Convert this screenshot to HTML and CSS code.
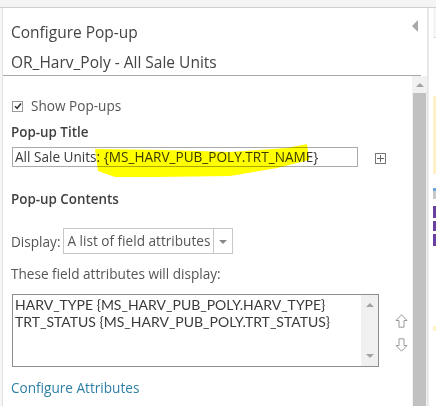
FILE: index.html
```html
<!DOCTYPE html>
<html lang="en">

<head>
    <meta charset="UTF-8">
    <meta name="viewport" content="width=device-width, initial-scale=1.0">
    <title>Configure Pop-up</title>
    <link rel="stylesheet" href="styles.css">
</head>

<body>
    <div class="topbar"></div>
    <div class="frame">
        <div class="gutter"></div>
        <div class="panel">
            <div class="panel-head">
                <div class="head-row">
                    <span class="head-title">Configure Pop-up</span>
                    <span class="collapse"></span>
                </div>
                <div class="layer-name">OR_Harv_Poly - All Sale Units</div>
            </div>
            <div class="panel-body">
                <div class="content">
                    <label class="check-row">
                        <span class="checkbox">
                            <svg width="8" height="8" viewBox="0 0 8 8">
                                <path d="M1 4.2 L3.1 6.3 L7 1.6" fill="none" stroke="#333" stroke-width="1.5"/>
                            </svg>
                        </span>
                        Show Pop-ups
                    </label>

                    <div class="section-title">Pop-up Title</div>
                    <div class="title-row">
                        <div class="field">All Sale Units: {MS_HARV_PUB_POLY.TRT_NAME}</div>
                        <span class="plus-btn"></span>
                        <!-- marker stroke over the title expression -->
                        <svg class="marker" width="436" height="60" viewBox="0 0 436 60">
                            <path d="M80 5 L150 6 L215 8 L272 4 L292 0 L294 16 L262 24 L215 32 L140 33 L100 33 L83 27 Z" fill="#ffff00"/>
                        </svg>
                    </div>

                    <div class="section-title contents-title">Pop-up Contents</div>
                    <div class="display-row">
                        <span>Display:</span>
                        <div class="select">
                            <span class="select-text">A list of field attributes</span>
                            <span class="select-arrow"></span>
                        </div>
                    </div>

                    <div class="hint">These field attributes will display:</div>
                    <div class="attr-row">
                        <div class="attr-list">
                            <div class="attr-lines">
                                <div>HARV_TYPE {MS_HARV_PUB_POLY.HARV_TYPE}</div>
                                <div>TRT_STATUS {MS_HARV_PUB_POLY.TRT_STATUS}</div>
                            </div>
                            <div class="mini-scroll">
                                <span class="tri-up"></span>
                                <span class="tri-down"></span>
                            </div>
                        </div>
                        <div class="move-btns">
                            <svg width="13" height="14" viewBox="0 0 13 14">
                                <path d="M6.5 0.8 L12 6.5 L9 6.5 L9 13.2 L4 13.2 L4 6.5 L1 6.5 Z" fill="#fff" stroke="#999" stroke-width="1"/>
                            </svg>
                            <svg width="13" height="14" viewBox="0 0 13 14">
                                <path d="M6.5 13.2 L12 7.5 L9 7.5 L9 0.8 L4 0.8 L4 7.5 L1 7.5 Z" fill="#fff" stroke="#999" stroke-width="1"/>
                            </svg>
                        </div>
                    </div>

                    <a class="link" href="#">Configure Attributes</a>
                </div>
                <div class="scrollbar">
                    <span class="scroll-up"></span>
                    <div class="thumb"></div>
                </div>
            </div>
        </div>
        <div class="peek">
            <div class="peek-top"></div>
            <div class="peek-gap" style="height:58px"></div>
            <div class="peek-yellow" style="height:78px"></div>
            <div class="peek-gap" style="height:14px"></div>
            <div class="peek-blue" style="height:3px"></div>
            <div class="peek-gray" style="height:8px"></div>
            <div class="peek-gap" style="height:7px"></div>
            <div class="peek-purple" style="height:12px"></div>
            <div class="peek-gap" style="height:3px"></div>
            <div class="peek-purple" style="height:10px"></div>
            <div class="peek-gap" style="height:3px"></div>
            <div class="peek-purple" style="height:12px"></div>
            <div class="peek-gap" style="height:80px"></div>
            <div class="peek-yellow" style="height:5px"></div>
        </div>
    </div>
</body>

</html>
```

FILE: styles.css
```css
* {
    box-sizing: border-box;
    margin: 0;
    padding: 0;
}
body {
    width: 436px;
    height: 406px;
    overflow: hidden;
    background-color: #fff;
    font-family: "Open Sans", "Liberation Sans", sans-serif;
    color: #555;
}
.topbar {
    height: 8px;
    background-color: #f4f4f4;
    border-bottom: solid 1px #cfcfcf;
}
.frame {
    display: flex;
    height: 398px;
}
.gutter {
    width: 3px;
    background-color: #f6f6f6;
    border-right: solid 1px #e2e2e2;
}
.panel {
    width: 425px;
    display: flex;
    flex-direction: column;
    border-right: solid 1px #e4e4e4;
}
.panel-head {
    margin-right: 6px;
    padding: 12px 0 1px 8px;
    border-bottom: solid 1px #a9a9a9;
}
.head-row {
    display: flex;
    justify-content: space-between;
}
.head-title,
.layer-name {
    font-size: 15.5px;
    line-height: 24px;
    color: #444;
}
.layer-name {
    margin-top: 6px;
}
.collapse {
    margin-right: 3px;
    width: 0;
    height: 0;
    border-top: solid 6px transparent;
    border-bottom: solid 6px transparent;
    border-right: solid 6px #a8a8a8;
}
.panel-body {
    flex: 1;
    display: flex;
    overflow: hidden;
}
.content {
    flex: 1;
    padding: 20px 0 0 8px;
    font-size: 13.6px;
}
.check-row {
    display: flex;
    align-items: center;
    gap: 8px;
    line-height: 20px;
}
.checkbox {
    margin-left: 1px;
    width: 11px;
    height: 11px;
    border: solid 1px #9a9a9a;
    display: flex;
    align-items: center;
    justify-content: center;
}
.section-title {
    margin-top: 6px;
    font-size: 13.4px;
    font-weight: 600;
    line-height: 20px;
    color: #3f3f3f;
}
.contents-title {
    margin-top: 22px;
}
.title-row {
    position: relative;
    margin-top: 5px;
    display: flex;
    align-items: center;
}
.field {
    margin-left: 1px;
    width: 346px;
    height: 20px;
    padding-left: 2px;
    border: solid 1px #aaa;
    line-height: 18px;
    color: #3a3a3a;
}
.plus-btn {
    position: relative;
    margin-left: 17px;
    margin-top: 2px;
    width: 11px;
    height: 11px;
    border: solid 1px #777;
}
.plus-btn::before,
.plus-btn::after {
    content: "";
    position: absolute;
    background-color: #666;
}
.plus-btn::before {
    left: 1px;
    right: 1px;
    top: 4px;
    height: 1px;
}
.plus-btn::after {
    top: 1px;
    bottom: 1px;
    left: 4px;
    width: 1px;
}
.marker {
    position: absolute;
    left: 4px;
    top: -3px;
    mix-blend-mode: multiply;
    pointer-events: none;
}
.display-row {
    margin-top: 19px;
    display: flex;
    align-items: center;
    gap: 3px;
}
.select {
    display: flex;
    height: 26px;
    border: solid 1px #c8c8c8;
}
.select-text {
    padding: 0 3px;
    line-height: 24px;
    border-right: solid 1px #c8c8c8;
}
.select-arrow {
    width: 18px;
    position: relative;
}
.select-arrow::after {
    content: "";
    position: absolute;
    left: 5px;
    top: 11px;
    border-left: solid 4px transparent;
    border-right: solid 4px transparent;
    border-top: solid 4px #888;
}
.hint {
    margin-top: 10px;
    line-height: 20px;
}
.attr-row {
    margin-top: 10px;
    display: flex;
    align-items: center;
}
.attr-list {
    margin-left: 1px;
    width: 367px;
    height: 73px;
    display: flex;
    border: solid 1px #8e8e8e;
}
.attr-lines {
    flex: 1;
    padding: 1px 0 0 2px;
    font-family: Lato, "Open Sans", sans-serif;
    font-size: 14px;
    line-height: 17px;
    color: #3a3a3a;
}
.mini-scroll {
    width: 17px;
    background-color: #f0f0f0;
    display: flex;
    flex-direction: column;
    justify-content: space-between;
    align-items: center;
    padding: 8px 0 8px;
}
.tri-up {
    border-left: solid 4px transparent;
    border-right: solid 4px transparent;
    border-bottom: solid 4px #a3a3a3;
}
.tri-down {
    border-left: solid 4px transparent;
    border-right: solid 4px transparent;
    border-top: solid 4px #a3a3a3;
}
.move-btns {
    margin-left: 16px;
    margin-top: 5px;
    display: flex;
    flex-direction: column;
    gap: 10px;
}
.link {
    display: block;
    margin-top: 11px;
    font-size: 13.6px;
    line-height: 20px;
    color: #2d7fa6;
    text-decoration: none;
}
.scrollbar {
    width: 15px;
    background-color: #f1f1f1;
    display: flex;
    flex-direction: column;
    align-items: center;
}
.scroll-up {
    margin-top: 7px;
    border-left: solid 4px transparent;
    border-right: solid 4px transparent;
    border-bottom: solid 4px #a3a3a3;
}
.thumb {
    margin-top: 6px;
    width: 13px;
    flex: 1;
    background-color: #c1c1c1;
}
.peek {
    width: 8px;
    display: flex;
    flex-direction: column;
    padding-left: 4px;
    border-left: solid 1px #ececec;
}
.peek-top {
    height: 30px;
    background-color: #f5f5f5;
    border-bottom: solid 1px #e0e0e0;
}
.peek-yellow {
    background-color: #fff2c8;
}
.peek-blue {
    background-color: #6aa5e0;
}
.peek-gray {
    background-color: #c9c9c9;
}
.peek-purple {
    background-color: #6a3f9e;
}
```
